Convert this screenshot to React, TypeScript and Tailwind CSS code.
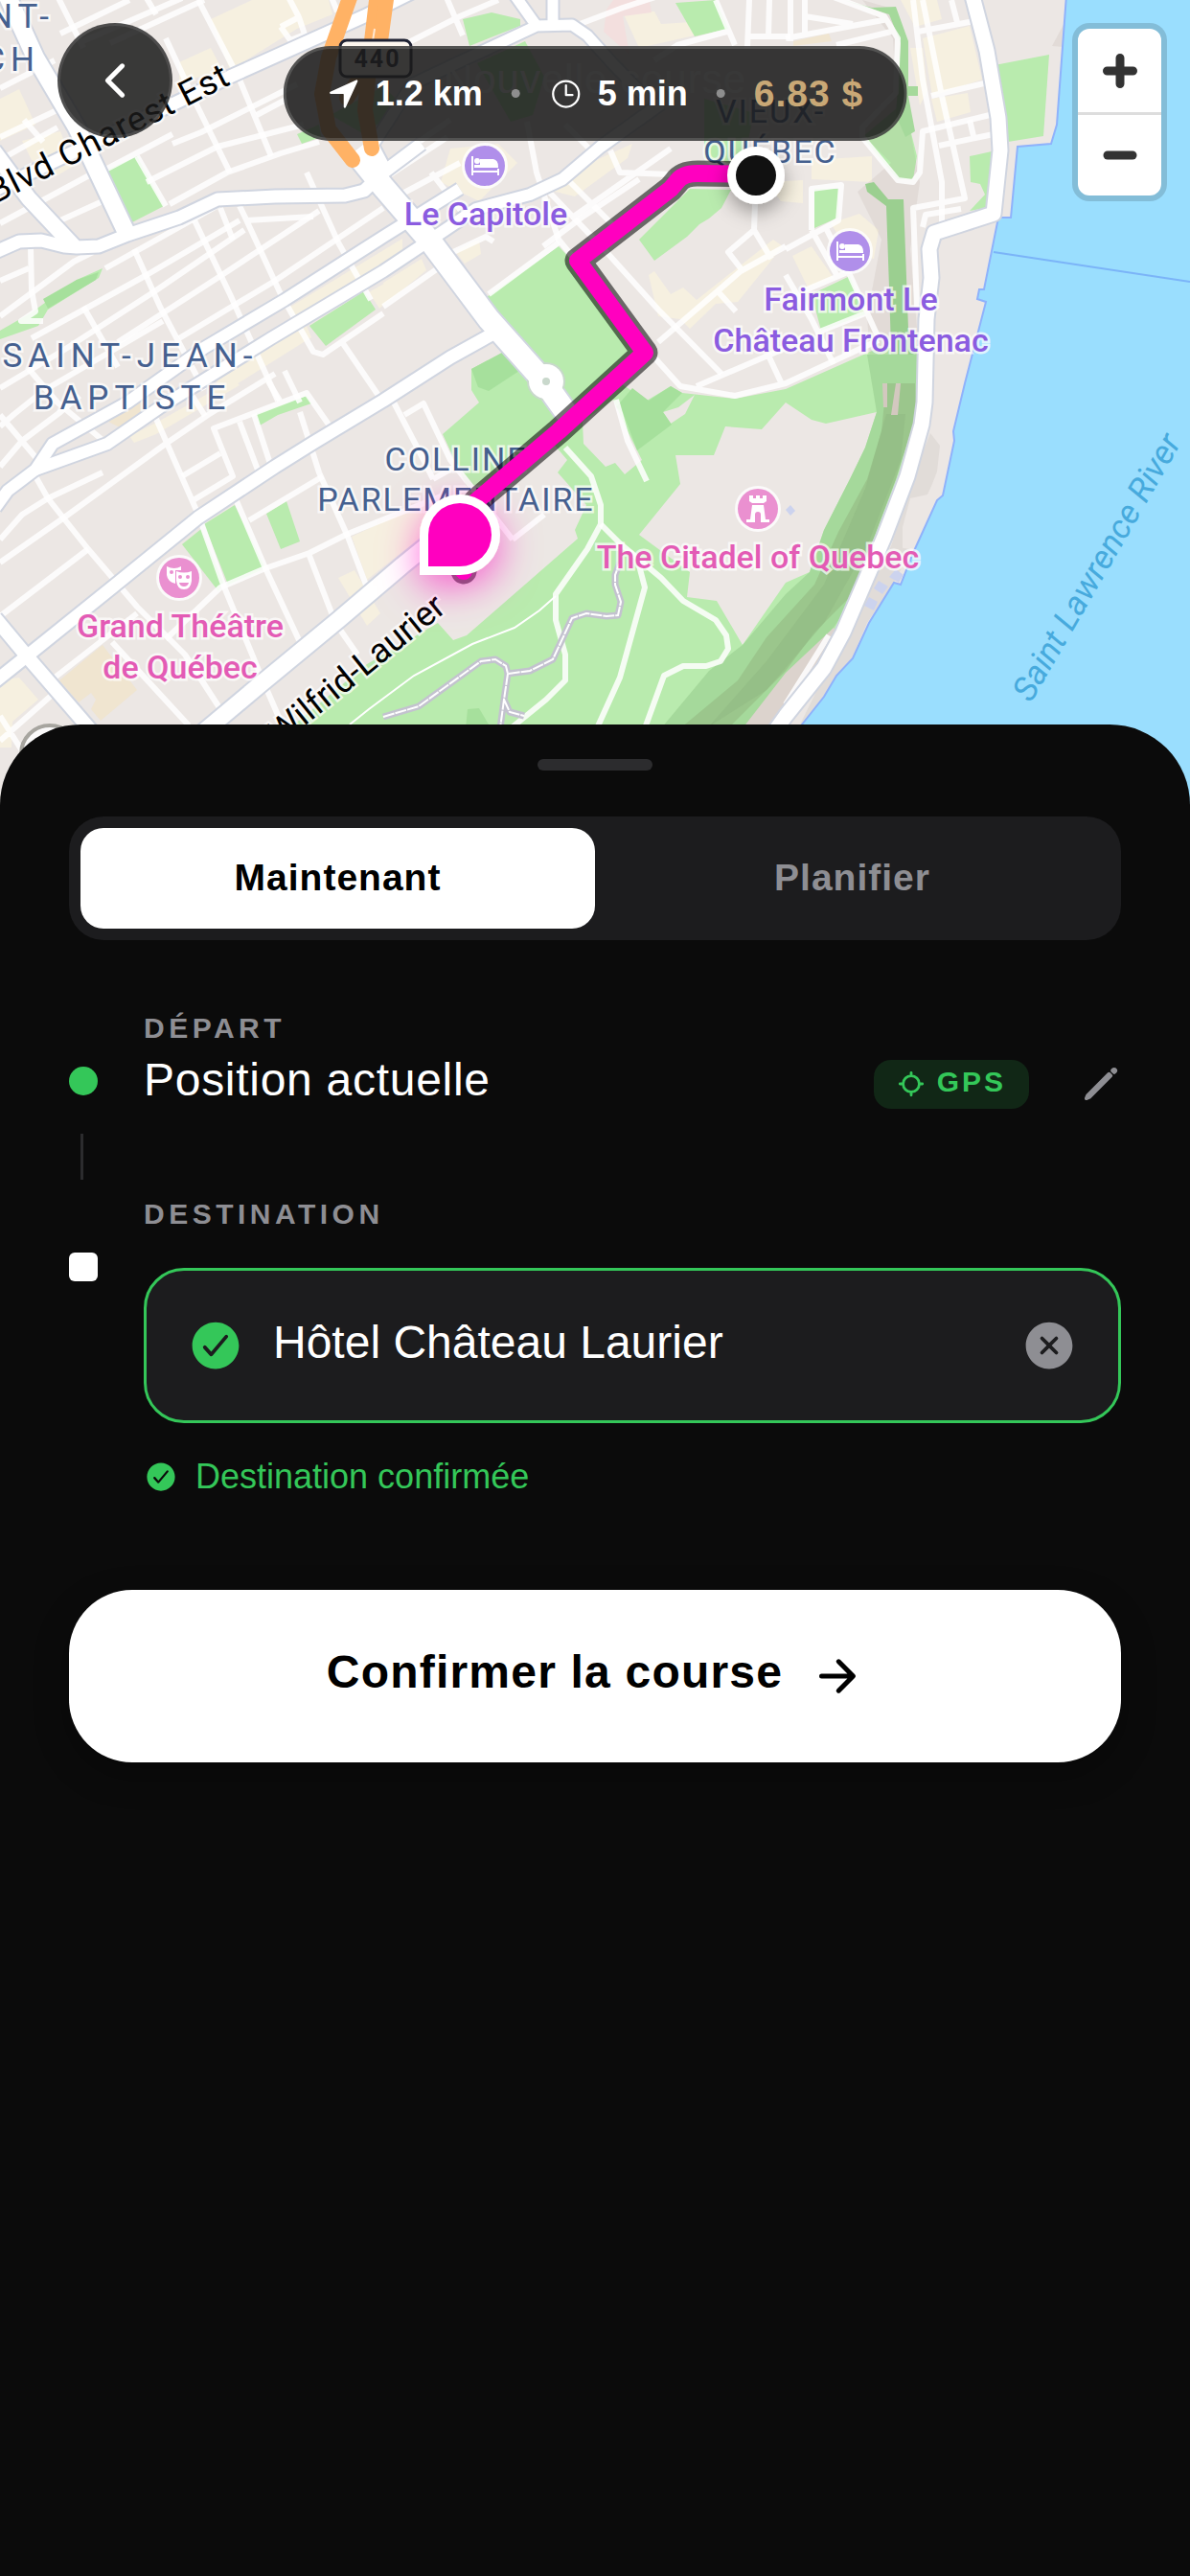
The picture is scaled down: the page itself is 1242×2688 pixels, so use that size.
import { useState } from "react";
import {
  IoArrowForward,
  IoCheckmarkCircle,
  IoChevronBack,
  IoCloseCircle,
  IoLocate,
  IoNavigate,
  IoPencil,
  IoTimeOutline,
} from "react-icons/io5";

const PARKS = [
  "110,178 143,163 171,215 138,232",
  "107,280 103,290 50,323 40,340 0,354 0,345 33,326 80,292",
  "323,340 380,304 392,323 340,361",
  "267,432 320,413 325,421 290,433 271,444",
  "190,568 210,552 233,608 228,617",
  "213,547 245,527 277,593 238,610",
  "278,536 299,523 313,565 293,573",
  "483,20 513,13 543,20 543,27 490,48",
  "498,66 548,43 568,80 556,120 533,127",
  "310,140 333,130 335,143 315,150",
  "345,120 400,90 420,110 380,140",
  "705,3 747,0 760,30 725,38",
  "735,103 787,118 775,173 735,165",
  "667,250 720,197 763,198 753,217 740,228 730,234 717,247 683,272",
  "1038,68 1095,57 1089,142 1052,148",
  "1012,163 1035,158 1030,217 1012,220 1028,203 1023,192 1013,190",
  "900,143 943,107 957,163 953,187 937,187",
  "850,197 875,197 875,227 850,238",
  "847,307 887,288 903,328 857,345",
  // Plaines d'Abraham + parc de l'Esplanade
  "508,310 583,257 600,275 663,367 640,395 675,418 700,403 712,410 767,416 820,406 917,363 960,363 965,430 930,540 860,690 800,770 290,770 383,693 457,650 473,668 487,663 603,562 600,553 612,527 582,493 592,480 575,460 495,525 462,453 500,420 492,407 492,385 533,364 560,390",
];

const LAND_PATCHES = [
  "705,475 745,475 757,445 795,448 820,420 847,438 862,442 915,430 903,467 887,500 860,553 845,597 820,608 775,673 748,627 717,623 720,597 667,558 710,505",
  "608,440 640,417 655,450 670,480 652,495 642,483 632,487 609,463",
  "692,430 708,425 725,412 715,432 700,442",
];

const DARK_PARKS = [
  "492,385 533,363 545,385 510,408 499,404",
  "643,425 660,405 677,418 700,403 712,410 692,430 701,443 665,470 650,430",
  "80,292 103,284 100,292 50,322 45,312",
  "488,740 500,739 510,756 486,760",
];

const BEIGE = [
  "220,20 263,0 343,0 347,15 310,30 240,73",
  "187,65 220,50 233,75 187,85",
  "0,103 20,93 37,130 0,147",
  "23,147 63,137 77,173 60,183 33,167",
  "300,322 420,249 420,265 310,334",
  "385,305 420,285 420,300 396,322",
  "228,392 320,340 325,352 245,402 225,405",
  "135,455 165,440 245,395 250,402 163,453 140,462",
  "470,155 520,150 540,170 500,210 460,190",
  "560,195 660,150 655,165 600,205",
  "400,295 440,270 445,282 405,315",
  "475,262 500,250 502,265 485,275",
  "0,710 20,707 40,730 13,753 12,780 0,780",
  "367,560 420,535 455,520 440,560 383,605",
  "353,603 370,595 397,640 383,653",
  "650,13 683,12 690,25 722,23 725,37 667,50",
  "677,287 683,283 700,307 713,300 727,313 807,250 817,257 770,315 747,317 720,343 710,333 687,330",
  "963,40 1012,27 1025,83 973,100",
  "972,103 1010,97 1013,117 978,127",
  "940,0 978,0 983,20 955,28",
  "950,50 963,50 968,95 960,110",
  "847,167 910,163 910,190 847,187",
  "800,190 838,188 838,212 815,210",
  "827,267 847,257 870,290 843,300",
  "867,233 897,223 917,240 912,270 885,262",
];

const TAN = [
  "62,710 107,673 143,720 105,752 95,740 100,730 95,723 82,733",
  "113,440 143,415 160,430 127,447",
  "828,43 865,35 868,43 828,48",
];

const MINOR_ROADS = [
  "M0,92L57,63M63,35L135,0M82,45L190,-2M115,45L213,0M0,143L70,110M0,167L60,133M0,233L93,183M63,230L107,210",
  "M57,-10L87,50M150,-7L163,15M207,0L250,83L283,163M173,40L207,113L240,180M143,163L173,215M25,125L45,148",
  "M110,177L180,140M177,213L237,180L293,160L333,148M227,153L317,130M153,190L227,153M175,115L320,45M180,150L210,138L310,88",
  "M293,28L312,18L318,36L303,42L293,28M300,-5L312,18M345,-5L352,12M268,120L300,103",
  "M110,280L230,213M33,353L153,287L250,230M0,405L67,365L160,305L255,240M123,357L227,290L333,220M187,353L287,293L400,217M0,330L77,273L97,263",
  "M50,405L170,335M0,293L30,280M32,258L33,303L37,325L22,335L45,335M140,260L167,320L213,407M203,230L240,307L290,418M87,320L123,383",
  "M250,215L255,225L293,307L327,367L337,370L400,327M320,180L353,253L387,313M230,217L243,250M257,230L327,226M357,357L400,420M297,387L313,420M30,385L60,420L108,460",
  "M0,433L37,477M0,487L23,460L63,430L83,413M0,445L15,432L40,412M37,497L50,520L92,573L143,633L193,683L230,740M117,670L197,757",
  "M0,563L23,537L50,520L107,493M0,587L67,540L173,463L217,433L287,390M0,643L92,573M163,437L207,537L233,610L273,707L293,753M200,523L243,497L223,447L320,410L343,443",
  "M250,440L270,493M265,432L283,487M190,497L230,473M280,398L292,418M313,430L333,493L363,560L383,613M247,523L277,593L313,670",
  "M173,667L230,613L277,593L323,577L363,557L460,518M260,543L337,497M323,580L350,650L373,683M57,707L143,640M0,773L60,720M0,747L24,785M200,412L214,434",
  "M410,418L437,470L452,500M422,433L442,421L470,480L535,563M535,563L568,537M452,500L475,487",
  "M465,-5L483,37M425,45L480,17L520,0M600,27L650,8L690,-5M747,0L767,47M782,0L780,50M803,0L802,37M780,38L825,38M683,63L707,47L762,32",
  "M550,127L560,180L583,250L597,267M637,157L647,180L700,182M570,197L633,263L687,323L753,390M595,190L650,245M590,130L625,165M600,225L700,155",
  "M687,357L773,283L820,257M773,280L760,263L787,240L788,213M787,240L805,270M750,305L768,325M683,373L710,403L767,413L820,400L917,355M727,403L820,363M803,373L817,403",
  "M400,320L457,280M400,187L467,143M405,210L480,170M473,263L507,247L515,252M567,257L607,227L667,187M510,307L583,253M450,180L485,225M420,160L470,125",
  "M825,0V43M840,-3V38M840,17L890,25M820,40L927,20M873,47L930,33M870,-3L923,17L937,40L935,97L900,133L900,143L937,188L953,190L960,180L963,137L1033,120",
  "M953,0L963,83L983,190L983,233M963,0L983,100L1007,207L953,217L957,320M958,33L1017,22M972,100L1027,87M980,152L1037,140M993,0L1000,27M1012,125L1016,142",
  "M847,240V197L878,193L875,230L820,260M820,287L847,333L870,380M863,240L887,287L917,353M840,303L887,283M853,347L903,327M847,240L875,290M963,237L966,224L1003,218",
];

const PARK_ROADS = [
  "M590,467L617,497L627,527L627,547L613,573L580,620L580,647L590,683L590,710L570,730L533,760",
  "M627,547L647,567L690,603L713,627L747,647L758,663L760,677L752,690L737,695L713,695L693,705L673,760",
  "M667,590L673,613L647,707L623,760M643,417L655,460L675,502M820,735L865,663",
];

const MAJOR_ROADS = [
  { d: "M5,-10L37,60L80,133L133,245", width: 18 },
  { d: "M-7,157L30,207L77,257", width: 16 },
  { d: "M-5,263L20,252L43,251L67,257L80,258L103,257L133,245L187,227L227,208L287,205L360,204L380,199L400,180L440,150", width: 13 },
  { d: "M-5,198L240,80L380,17L430,-8", width: 13 },
  { d: "M535,-8L560,27M577,-5V25M560,27L597,26L613,37L640,67L677,105M560,27L483,63L430,88L390,150", width: 11 },
  { d: "M690,108L627,153L587,187L553,203L497,218L460,243L400,283L283,353L167,425L112,463L37,490", width: 12 },
  { d: "M480,197L400,247L297,313L213,363L133,420L55,463L37,490L8,512L-5,530", width: 12 },
  { d: "M-5,711L30,683L117,613L207,540L287,487L327,462L400,418L470,373L515,348", width: 13 },
  { d: "M205,770L273,713L353,647L420,590L500,525", width: 17 },
  { d: "M-5,645L30,687L100,768", width: 14 },
  { d: "M370,158L400,195L450,253L510,333L567,397L592,432", width: 23 },
  { d: "M388,150L405,182", width: 12 },
  { d: "M1014,-8L1030,53L1042,123L1044,157L1037,223L1000,235L975,243L970,260L972,290L967,333L965,420L962,443L947,497L923,560L880,660L860,697L820,747L805,768", width: 15 },
];

const TRAIL =
  "M400,748L437,737L502,690L517,688L528,695L530,703L553,700L577,688L597,645L612,640L633,643L645,642L648,628L642,610L642,600L647,587M530,703L526,730L522,760M526,730L532,743L547,747";

const ROUTE =
  "M789,182L728,181Q712,181 706,190L700,197L603,272L673,368L583,450L497,523L484,596";

function Polygons({ items, className }: { items: string[]; className: string }) {
  return (
    <g className={className}>
      {items.map((points) => (
        <polygon key={points} points={points} />
      ))}
    </g>
  );
}

function HotelPin({ x, y }: { x: number; y: number }) {
  return (
    <g transform={`translate(${x} ${y})`}>
      <circle r="24" className="fill-white/80" />
      <circle r="21" className="fill-[#b08fea]" />
      <path d="M-13,-10V10M-13,6H14M14,10V3" className="fill-none stroke-white stroke-2" />
      <path d="M-5,-7H9Q14,-6 14,1V2H-11V-1H-5Z" className="fill-white" />
      <circle cx="-8" cy="-5" r="3" className="fill-white" />
    </g>
  );
}

function TheatrePin({ x, y }: { x: number; y: number }) {
  return (
    <g transform={`translate(${x} ${y})`}>
      <circle r="24" className="fill-white/80" />
      <circle r="21" className="fill-[#ea90d0]" />
      <path d="M-13,-12Q-5,-8 2,-12V-8H-4V6Q-12,4 -13,-3Z" className="fill-white" />
      <circle cx="-8" cy="-6" r="2" className="fill-[#ea90d0]" />
      <path d="M-3,-7Q5,-4 13,-7V3Q12,12 5,12Q-2,12 -3,3Z" className="fill-white" />
      <circle cx="1" cy="-1" r="2" className="fill-[#ea90d0]" />
      <circle cx="9" cy="-1" r="2" className="fill-[#ea90d0]" />
      <path d="M0,5H10Q9,9 5,9Q1,9 0,5Z" className="fill-[#ea90d0]" />
    </g>
  );
}

function CastlePin({ x, y }: { x: number; y: number }) {
  return (
    <g transform={`translate(${x} ${y})`}>
      <circle r="24" className="fill-white/80" />
      <circle r="21" className="fill-[#ea90d0]" />
      <path
        d="M-9,-14H-5V-11H-2V-14H2V-11H5V-14H9V-8L6,-6H-6L-9,-8ZM-6,-4H6L8,11H12V14H3V6Q3,3 0,3Q-3,3 -3,6V14H-12V11H-8Z"
        className="fill-white"
      />
    </g>
  );
}

const HALO = "[paint-order:stroke] stroke-white/70 stroke-[5px]";

function CityMap() {
  return (
    <svg
      viewBox="0 0 1242 840"
      preserveAspectRatio="xMidYMin slice"
      className="block h-[840px] w-full bg-[#ece7e4] font-['Roboto',sans-serif]"
      role="img"
      aria-label="Carte de Québec"
    >
      <defs>
        <filter id="pinGlow" x="-100%" y="-100%" width="300%" height="300%">
          <feDropShadow dx="0" dy="12" stdDeviation="20" floodColor="#ff00bf" floodOpacity="0.6" />
        </filter>
        <filter id="pinShadow" x="-100%" y="-100%" width="300%" height="300%">
          <feDropShadow dx="0" dy="8" stdDeviation="10" floodColor="#000" floodOpacity="0.35" />
        </filter>
      </defs>

      <rect width="1242" height="840" className="fill-[#ece7e4]" />
      <Polygons items={BEIGE} className="fill-[#f6f0e0]" />
      <Polygons items={TAN} className="fill-[#f0e5d0]" />
      <polygon points="633,10 640,0 678,0 680,13 650,17 657,57 630,33" className="fill-[#f3dfde]" />
      <Polygons items={PARKS} className="fill-[#b9ebae]" />
      <Polygons items={LAND_PATCHES} className="fill-[#ece7e4]" />
      <Polygons items={DARK_PARKS} className="fill-[#a6e09c]" />

      {/* Relief de la falaise */}
      <polygon
        points="900,0 935,10 948,50 945,110 960,190 950,260 962,400 945,480 910,400 905,330 920,250 895,200 930,170 900,140 935,90 932,40"
        className="fill-[#8a7a6c]/10"
      />
      <polygon points="1113,20 1098,48 1110,49" className="fill-[#8a7a6c]/10" />
      <polygon points="971,452 981,465 978,492 973,505 968,516 950,520 942,550 942,575 930,570 952,500" className="fill-[#e1dcd8]" />
      <polygon points="930,570 950,573 935,605 905,650 890,685 850,745 835,756 880,665" className="fill-[#e1dcd8]" />
      <polygon points="880,0 910,8 935,7 948,43 948,90 958,90 958,100 948,100 955,137 945,143 935,120 940,45 928,15" className="fill-[#a5d99b]" />
      <polygon points="903,192 912,190 927,208 943,208 948,343 957,367 958,430 932,430 928,300 925,215 905,200" className="fill-[#9bcf90]" />
      <polygon
        points="905,370 957,370 960,420 950,450 935,500 912,560 880,640 870,655 840,690 790,760 690,760 740,700 775,673 820,620 845,597 860,553 887,500 903,467 915,430"
        className="fill-[#a5d99b]"
      />
      <polygon
        points="925,400 955,400 957,430 935,500 905,580 885,625 850,660 820,700 760,760 710,760 770,710 800,665 850,610 875,555 905,500 920,450"
        className="fill-[#9bc68c]"
      />
      <polygon points="925,432 945,432 940,480 905,570 860,650 800,720 740,758 800,690 860,610 903,510" className="fill-[#8fb881]/50" />
      <polygon points="921,400 926,400 926,425 922,425" className="fill-[#d3c8bf]" />
      <polygon points="935,400 940,400 937,433 930,433" className="fill-[#d3c8bf]" />
      <polygon points="870,655 880,668 810,760 775,760 820,702" className="fill-[#dcd3cd]" />

      {/* Fleuve */}
      <polygon
        points="1113,-5 1103,130 1097,150 1062,153 1055,227 1042,227 1027,302 1022,302 1020,312 1029,315 1007,400 995,450 996,460 984,517 978,522 953,577 940,610 933,608 907,650 890,687 873,705 860,727 837,756 780,845 1250,845 1250,-5"
        className="fill-[#9adefe] stroke-[#8fb2fb] stroke-2"
      />
      <path d="M1037,263L1242,294" className="fill-none stroke-[#7bb4f8] stroke-2" />
      <g className="fill-[#ccd3ee]">
        <polygon points="820,532 825,527 830,533 825,538" />
        <polygon points="935,594 943,600 938,608 928,602" />
        <polygon points="917,606 927,612 921,620 912,614" />
        <polygon points="907,623 916,628 912,637 902,632" />
      </g>

      <g className="fill-none stroke-white/85 stroke-[6px] [stroke-linejoin:round]">
        {MINOR_ROADS.map((d) => (
          <path key={d} d={d} />
        ))}
        {PARK_ROADS.map((d) => (
          <path key={d} d={d} />
        ))}
      </g>
      <path d="M365,756L385,740L432,705L493,672L537,655L563,637L580,622" className="fill-none stroke-white stroke-2" />
      <path d={TRAIL} className="fill-none stroke-[#c3c2cf] stroke-[7px] [stroke-linejoin:round]" />
      <path d={TRAIL} className="fill-none stroke-white stroke-2 [stroke-dasharray:12_1]" />

      <g className="fill-none stroke-[#d0d5e0] [stroke-linejoin:round]">
        {MAJOR_ROADS.map((road) => (
          <path key={road.d} d={road.d} strokeWidth={road.width + 4} />
        ))}
      </g>
      <circle cx="570" cy="398" r="20" className="fill-[#c9d8cc]" />
      <g className="fill-none stroke-white [stroke-linejoin:round]">
        {MAJOR_ROADS.map((road) => (
          <path key={road.d} d={road.d} strokeWidth={road.width} />
        ))}
      </g>
      <circle cx="570" cy="398" r="18" className="fill-white" />
      <circle cx="570" cy="398" r="4" className="fill-[#c9d8cc]" />

      {/* Autoroute 440 */}
      <g className="fill-none stroke-[#ffb265] stroke-[16px] [stroke-linecap:round] [stroke-linejoin:round]">
        <path d="M367,-8L343,60L336,98L343,135L368,167" />
        <path d="M394,-8L386,60L381,115L388,155" />
        <path d="M404,-8L396,50L362,102" />
      </g>
      <path d="M391,30L386,62" className="fill-none stroke-white/70 stroke-2" />
      <rect x="355" y="42" width="74" height="38" rx="7" className="fill-[#fdf6ee] stroke-[#1f2233] stroke-3" />
      <text x="394" y="70" textAnchor="middle" className="fill-[#1f2233] text-[25px] font-bold tracking-[2px]">
        440
      </text>

      {/* Quartiers */}
      <g className={`fill-[#45608f] text-[35px] tracking-[6px] ${HALO}`}>
        <text x="57" y="29" textAnchor="end">SAINT-</text>
        <text x="42" y="74" textAnchor="end">ROCH</text>
        <text x="136" y="383" textAnchor="middle">SAINT-JEAN-</text>
        <text x="138" y="427" textAnchor="middle">BAPTISTE</text>
      </g>
      <g className={`fill-[#45608f] text-[34px] tracking-[2px] ${HALO}`}>
        <text x="476" y="491" textAnchor="middle">COLLINE</text>
        <text x="476" y="533" textAnchor="middle">PARLEMENTAIRE</text>
        <text x="804" y="128" textAnchor="middle">VIEUX-</text>
        <text x="804" y="170" textAnchor="middle">QUÉBEC</text>
      </g>

      {/* Rues */}
      <g className={`fill-black text-[36px] ${HALO}`}>
        <text transform="translate(-5 213) rotate(-27)" className="tracking-[1px]">Blvd Charest Est</text>
        <text transform="translate(467 637) rotate(-39)" textAnchor="end">Wilfrid-Laurier</text>
      </g>
      <text transform="translate(1076 734) rotate(-60)" className="fill-[#47aadd] text-[35px] italic">
        Saint Lawrence River
      </text>

      {/* Itinéraire */}
      <g className="fill-none [stroke-linecap:round] [stroke-linejoin:round]">
        <path d={ROUTE} className="stroke-black/55 stroke-[27px]" />
        <path d={ROUTE} className="stroke-[#ff00bf] stroke-[18px]" />
      </g>

      {/* Points d'intérêt */}
      <HotelPin x={506} y={173} />
      <HotelPin x={887} y={262} />
      <TheatrePin x={187} y={603} />
      <CastlePin x={791} y={531} />
      <g className={`fill-[#8b5ce0] text-[34px] font-medium ${HALO}`}>
        <text x="507" y="235" textAnchor="middle">Le Capitole</text>
        <text x="888" y="324" textAnchor="middle">Fairmont Le</text>
        <text x="888" y="367" textAnchor="middle">Château Frontenac</text>
      </g>
      <g className={`fill-[#e35bb5] text-[34px] font-medium ${HALO}`}>
        <text x="188" y="665" textAnchor="middle">Grand Théâtre</text>
        <text x="188" y="708" textAnchor="middle">de Québec</text>
        <text x="791" y="593" textAnchor="middle">The Citadel of Quebec</text>
      </g>

      <g filter="url(#pinGlow)">
        <path d="M438,600V559A42,42 0 1 1 480,600Z" className="fill-white" />
        <path d="M447,591V558A33,33 0 1 1 480,591Z" className="fill-[#ff00bf]" />
      </g>
      <g filter="url(#pinShadow)">
        <circle cx="789" cy="183" r="30" className="fill-white" />
      </g>
      <circle cx="789" cy="183" r="21" className="fill-[#111111]" />

      <circle cx="52" cy="787" r="30" className="fill-white/80 stroke-[#a7a59f] stroke-4" />
    </svg>
  );
}

export default function App() {
  const [mode, setMode] = useState("maintenant");
  const [destination, setDestination] = useState("Hôtel Château Laurier");

  const tabClass = (active: boolean) =>
    active
      ? "h-[105px] flex-1 rounded-3xl bg-white text-[39px] font-bold tracking-[1px] text-black"
      : "h-[105px] flex-1 rounded-3xl text-[39px] font-bold tracking-[1px] text-[#8e8e93]";

  return (
    <main className="flex min-h-screen flex-col bg-[#0b0b0b] font-['Liberation_Sans',Arial,sans-serif] text-white">
      <section className="relative">
        <CityMap />

        <header className="absolute inset-x-0 top-6 flex h-[120px] items-center px-[60px]">
          <h1 className="absolute inset-x-0 top-[31px] text-center text-[42px] leading-[56px] font-normal tracking-[1px]">
            Nouvelle course
          </h1>
          <button
            type="button"
            aria-label="Retour"
            className="flex size-[120px] items-center justify-center rounded-full border-3 border-white/10 bg-[#1a1a1a]/85"
          >
            <IoChevronBack className="size-[54px]" />
          </button>
        </header>

        {/* Résumé de la course */}
        <div className="absolute top-12 left-1/2 flex h-[99px] -translate-x-1/2 items-center gap-[30px] rounded-full border-3 border-white/15 bg-[#1a1a1a]/87 px-[42px] text-4xl font-bold whitespace-nowrap">
          <span className="flex items-center gap-[15px]">
            <IoNavigate className="size-9" />
            1.2 km
          </span>
          <span className="size-[9px] rounded-full bg-[#8e8e8e]" />
          <span className="flex items-center gap-[15px]">
            <IoTimeOutline className="size-9" />
            5 min
          </span>
          <span className="size-[9px] rounded-full bg-[#8e8e8e]" />
          <span className="text-[39px] tracking-[1px] text-[#c9a876]">6.83 $</span>
        </div>

        <div className="absolute top-6 right-6 flex flex-col overflow-hidden rounded-[18px] border-6 border-black/15 bg-white bg-clip-padding">
          <button
            type="button"
            aria-label="Zoom avant"
            className="flex h-[90px] w-[87px] items-center justify-center border-b-3 border-[#dddddd]"
          >
            <svg viewBox="0 0 36 36" className="size-9 fill-none stroke-[#333333] stroke-[9px] [stroke-linecap:round]">
              <path d="M18,4.5V31.5M4.5,18H31.5" />
            </svg>
          </button>
          <button type="button" aria-label="Zoom arrière" className="flex h-[84px] w-[87px] items-center justify-center">
            <svg viewBox="0 0 36 36" className="size-9 fill-none stroke-[#333333] stroke-[9px] [stroke-linecap:round]">
              <path d="M5,18H31" />
            </svg>
          </button>
        </div>
      </section>

      <section className="relative -mt-[84px] flex-1 rounded-t-[84px] bg-[#0b0b0b] px-[72px] pt-9">
        <div className="mx-auto h-3 w-[120px] rounded-full bg-[#2c2c2e]" />

        <div className="mt-12 flex rounded-[36px] bg-[#1c1c1e] p-3">
          <button type="button" onClick={() => setMode("maintenant")} className={tabClass(mode === "maintenant")}>
            Maintenant
          </button>
          <button type="button" onClick={() => setMode("planifier")} className={tabClass(mode === "planifier")}>
            Planifier
          </button>
        </div>

        {/* Départ */}
        <div className="mt-[74px] flex gap-12">
          <div className="pt-[58px]">
            <div className="size-[30px] rounded-full bg-[#34c759]" />
          </div>
          <div className="flex-1">
            <p className="text-3xl leading-9 font-bold tracking-[0.15em] text-[#8e8e93]">DÉPART</p>
            <div className="mt-1 flex h-[72px] items-center">
              <p className="flex-1 pb-2 text-5xl tracking-[0.015em]">Position actuelle</p>
              <span className="flex h-[51px] items-center gap-3 rounded-[18px] bg-[#34c759]/15 px-6 text-[#34c759]">
                <IoLocate className="size-[30px]" />
                <span className="pb-1 text-3xl font-bold tracking-[3px]">GPS</span>
              </span>
              <button type="button" aria-label="Modifier le départ" className="ml-[54px] text-[#8e8e93]">
                <IoPencil className="size-[42px]" />
              </button>
            </div>
          </div>
        </div>

        <div className="mt-4 ml-3 h-12 w-[3px] bg-[#2c2c2e]" />

        {/* Destination */}
        <div className="mt-[18px] flex gap-12">
          <div className="pt-[58px]">
            <div className="size-[30px] rounded-md bg-white" />
          </div>
          <div className="flex-1">
            <label
              htmlFor="destination"
              className="block text-3xl leading-9 font-bold tracking-[0.15em] text-[#8e8e93]"
            >
              DESTINATION
            </label>
            <div className="mt-[38px] flex h-[162px] items-center gap-[30px] rounded-[42px] border-3 border-[#34c759] bg-[#1c1c1e] px-[42px]">
              <IoCheckmarkCircle className="size-[60px] shrink-0 text-[#34c759]" />
              <input
                id="destination"
                type="text"
                value={destination}
                onChange={(e) => setDestination(e.target.value)}
                className="min-w-0 flex-1 bg-transparent pb-2 text-5xl text-white outline-none"
              />
              <button type="button" aria-label="Effacer" onClick={() => setDestination("")} className="text-[#8e8e93]">
                <IoCloseCircle className="size-[60px]" />
              </button>
            </div>
            <p className="mt-9 flex items-center gap-[18px] text-4xl text-[#34c759]">
              <IoCheckmarkCircle className="size-9" />
              Destination confirmée
            </p>
          </div>
        </div>

        <button
          type="button"
          className="mt-[98px] flex h-[180px] w-full items-center justify-center gap-[30px] rounded-[66px] bg-white text-5xl font-bold tracking-[0.025em] text-black shadow-[0_12px_36px_rgba(0,0,0,0.3)]"
        >
          <span className="pb-2">Confirmer la course</span>
          <IoArrowForward className="size-[54px]" />
        </button>
      </section>
    </main>
  );
}
